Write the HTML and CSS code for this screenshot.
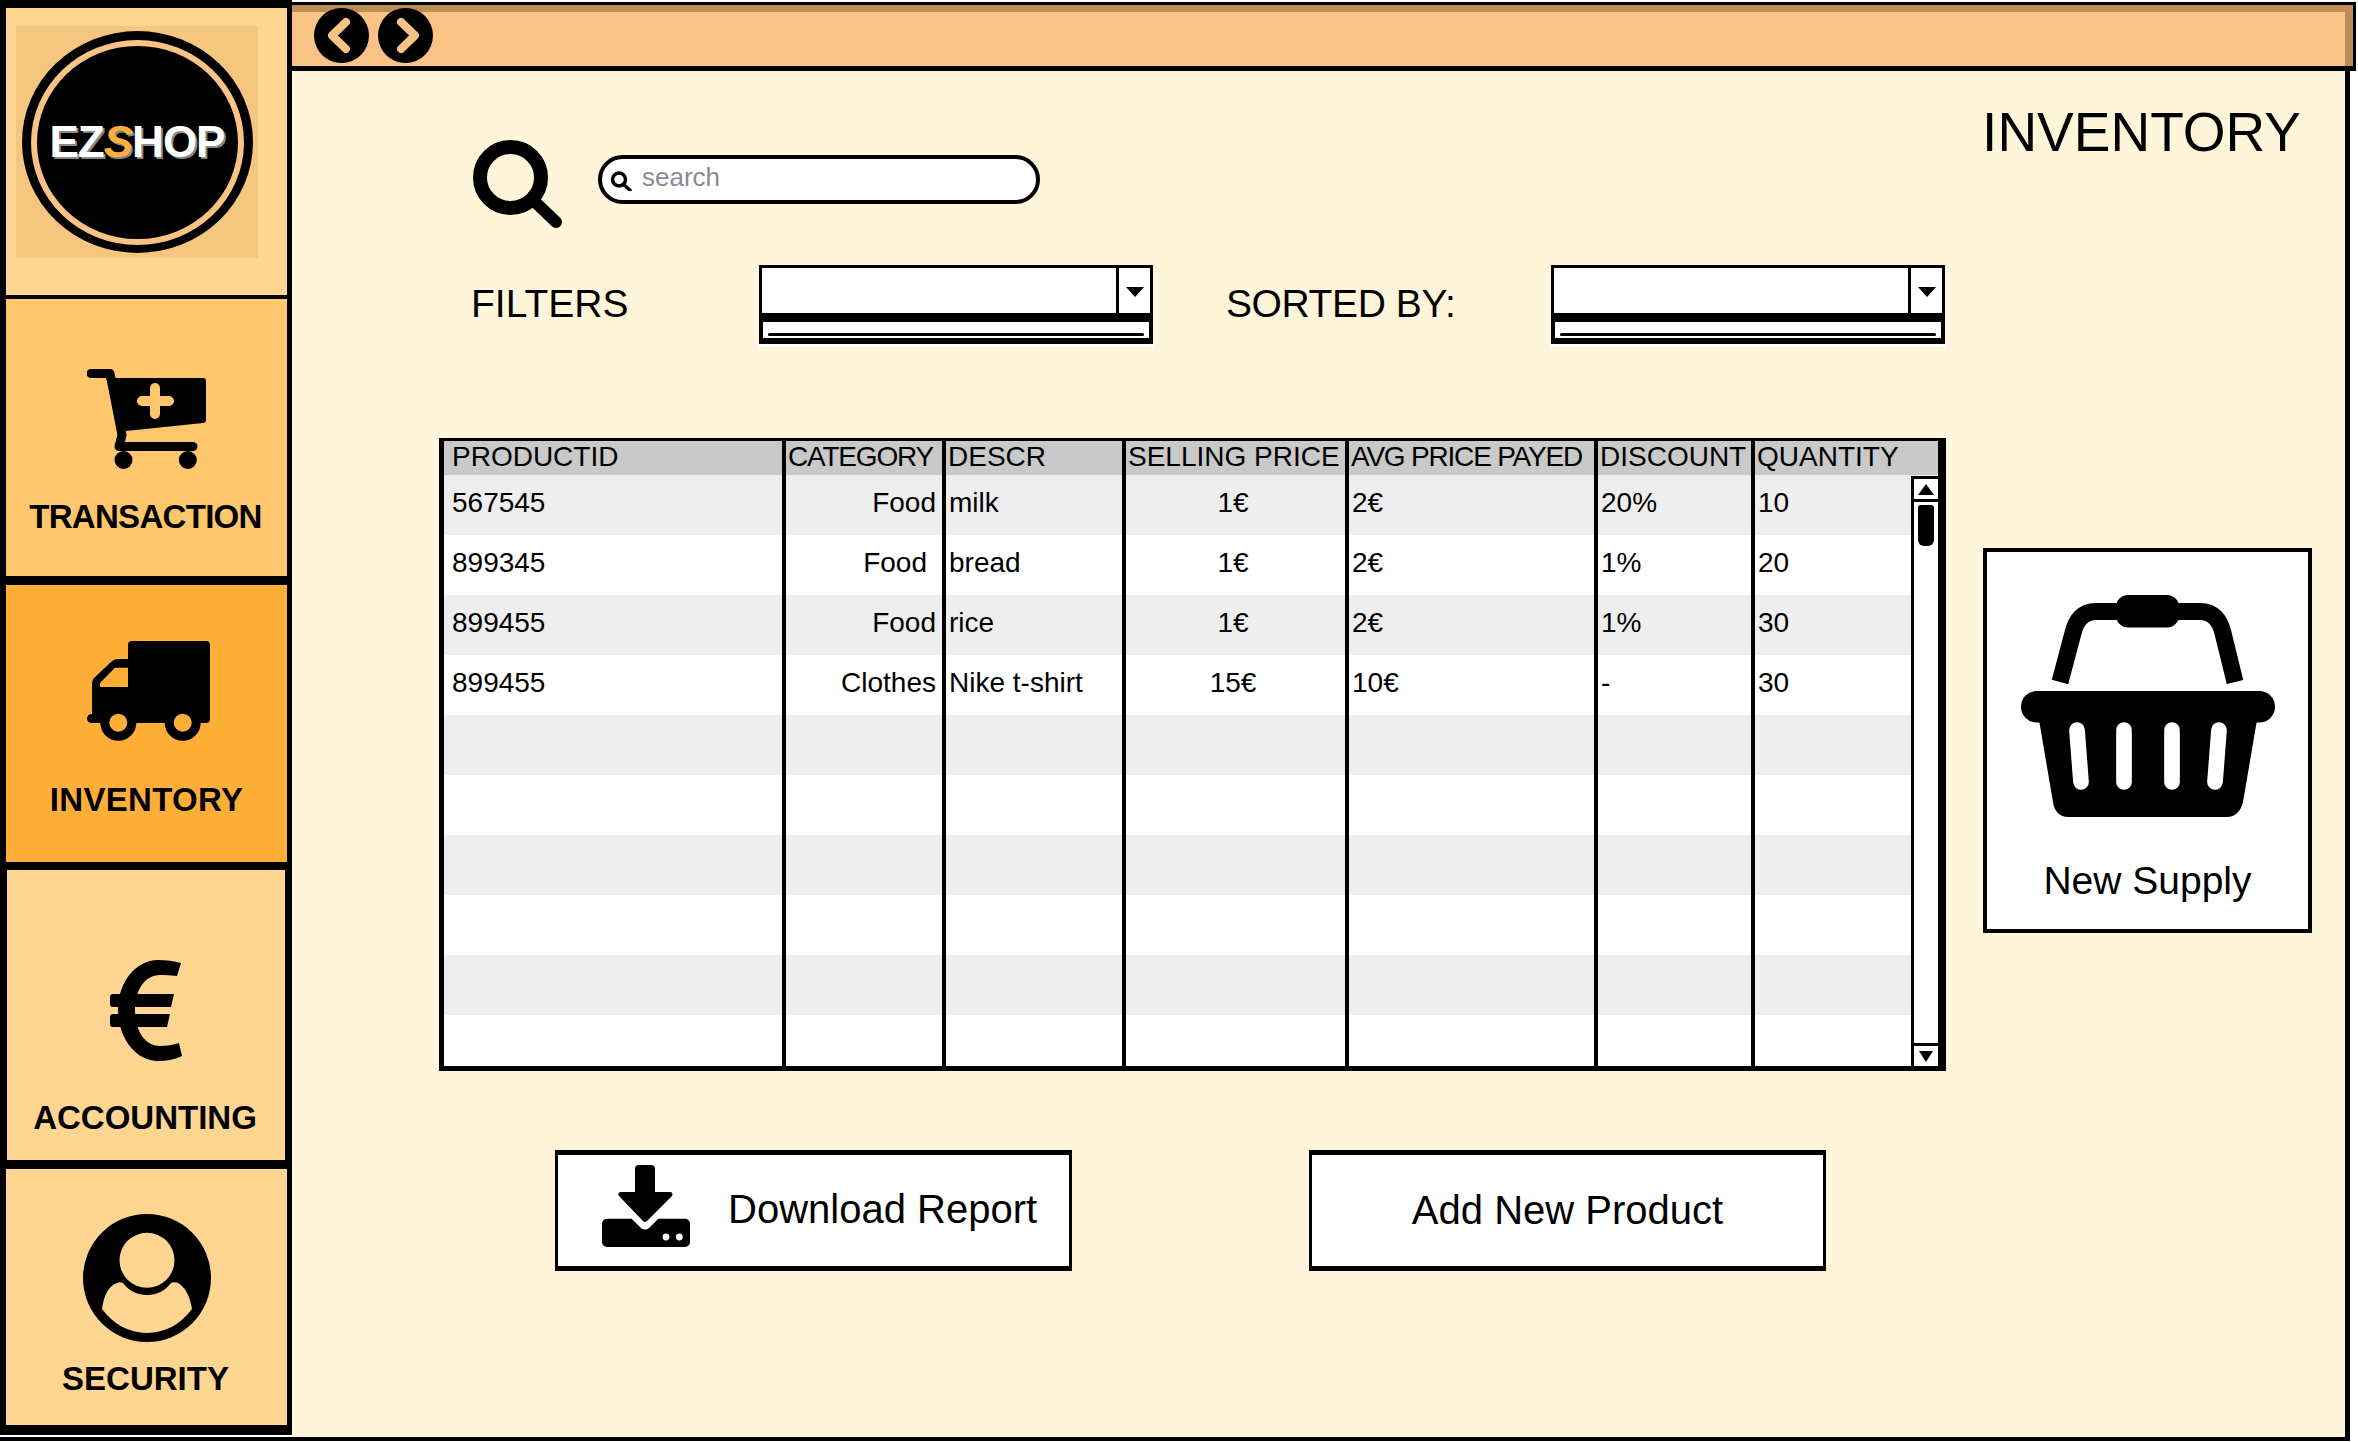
FILE: index.html
```html
<!DOCTYPE html>
<html lang="en">
<head>
    <meta charset="UTF-8">
    <title>EZShop Inventory</title>
    <link rel="stylesheet" href="styles.css">
</head>
<body>

<div class="app">
    <div class="sidebar">
        <div class="nav-logo">
            <div class="logo-bg">
                <div class="logo-circle">
                    <div class="logo-ring">
                        <span class="logo-text">EZ<span class="logo-s">S</span>HOP</span>
                    </div>
                </div>
            </div>
        </div>

        <div class="nav-item nav-transaction">
            <svg class="icon-cart" viewBox="0 0 119 100">
                <path d="M4 4.5H23L35 66L32 77.5H106" fill="none" stroke="#000" stroke-width="9" stroke-linecap="round" stroke-linejoin="round"/>
                <path d="M19 9H116a3 3 0 0 1 3 3V51a3 3 0 0 1-3 3L39 62Z"/>
                <circle cx="36.5" cy="91" r="9"/>
                <circle cx="100.8" cy="91" r="9"/>
                <path d="M68 19V45M55 32H82" fill="none" stroke="#FFC76D" stroke-width="10" stroke-linecap="round"/>
            </svg>
            <span class="nav-label">TRANSACTION</span>
        </div>

        <div class="nav-item nav-inventory">
            <svg class="icon-truck" viewBox="0 0 123 100">
                <path d="M41 4a4 4 0 0 1 4-4H119a4 4 0 0 1 4 4V78a4 4 0 0 1-4 4H41Z"/>
                <path fill-rule="evenodd" d="M42 18H30a9 9 0 0 0-6 3L7 37a8 8 0 0 0-2 5V73H4.500a4.500 4.500 0 0 0 0 9H42ZM42 26.700H28L13 42V46H42Z"/>
                <circle cx="31.300" cy="81.700" r="13.500" fill="#FFAF37" stroke="#000" stroke-width="9"/>
                <circle cx="95.700" cy="81.700" r="13.500" fill="#FFAF37" stroke="#000" stroke-width="9"/>
            </svg>
            <span class="nav-label">INVENTORY</span>
        </div>

        <div class="nav-item nav-accounting">
            <svg class="icon-euro" viewBox="0 0 72 101">
                <path d="M71 3L67 16C60 15 55 15 50 15C35 15 25 30 25 50C25 72 36 86 50 86C57 86 63 85 69 83L72 96C64 100 56 101 48 101C26 101 8 78 8 50C8 22 26 0 48 0C56 0 64 1 71 3Z"/>
                <path d="M3 34H64L61 47H3a3 3 0 0 1-3-3V37a3 3 0 0 1 3-3Z"/>
                <path d="M3 54H60L57 67H3a3 3 0 0 1-3-3V57a3 3 0 0 1 3-3Z"/>
            </svg>
            <span class="nav-label">ACCOUNTING</span>
        </div>

        <div class="nav-item nav-security">
            <svg class="icon-user" viewBox="0 0 128 128">
                <circle cx="64" cy="64" r="64"/>
                <circle cx="64" cy="46.300" r="27.500" fill="#FFD592"/>
                <path fill="#FFD592" d="M19 95C21 80 26 72 34 69C36 68 38 68 40 69C46 77 54 81 64 81C74 81 82 77 88 69C90 68 93 68 95 69C102 73 107 82 109 95C98 110 82 119 64 119C46 119 30 110 19 95Z"/>
            </svg>
            <span class="nav-label">SECURITY</span>
        </div>
    </div>

    <div class="content">
        <div class="topbar">
            <svg class="round-btn" viewBox="0 0 55 55">
                <circle cx="27.500" cy="27.500" r="27.500"/>
                <path d="M32 14L18 27.500L32 41" fill="none" stroke="#F8C384" stroke-width="8" stroke-linecap="round" stroke-linejoin="round"/>
            </svg>
            <svg class="round-btn" viewBox="0 0 55 55">
                <circle cx="27.500" cy="27.500" r="27.500"/>
                <path d="M23 14L37 27.500L23 41" fill="none" stroke="#F8C384" stroke-width="8" stroke-linecap="round" stroke-linejoin="round"/>
            </svg>
        </div>

        <div class="main">
            <div class="top-row">
                <div class="search-row">
                    <svg class="icon-search" viewBox="0 0 90 88">
                        <circle cx="37.500" cy="37.500" r="30.500" fill="none" stroke="#000" stroke-width="14"/>
                        <path d="M60 60L83 82" fill="none" stroke="#000" stroke-width="12" stroke-linecap="round"/>
                    </svg>
                    <div class="search-bar">
                        <svg class="icon-search-small" viewBox="0 0 22 20">
                            <circle cx="9" cy="8.500" r="6.500" fill="none" stroke="#000" stroke-width="3.500"/>
                            <path d="M14 14L20 19" fill="none" stroke="#000" stroke-width="3.500" stroke-linecap="round"/>
                        </svg>
                        <span class="search-text">search</span>
                    </div>
                </div>
                <h1 class="page-title">INVENTORY</h1>
            </div>

            <div class="filter-row">
                <span class="filter-label label-filters">FILTERS</span>
                <div class="select">
                    <div class="select-main">
                        <div class="select-arrow"><div class="tri-down"></div></div>
                    </div>
                    <div class="select-list"><div class="select-line"></div></div>
                </div>
                <span class="filter-label label-sorted">SORTED BY:</span>
                <div class="select">
                    <div class="select-main">
                        <div class="select-arrow"><div class="tri-down"></div></div>
                    </div>
                    <div class="select-list"><div class="select-line"></div></div>
                </div>
            </div>

            <div class="table-row">
                <div class="table-wrap">
                    <table class="grid">
                        <colgroup>
                            <col class="col-id">
                            <col class="col-cat">
                            <col class="col-descr">
                            <col class="col-sell">
                            <col class="col-avg">
                            <col class="col-disc">
                            <col class="col-qty">
                        </colgroup>
                        <thead>
                            <tr>
                                <th class="first">PRODUCTID</th>
                                <th class="tight">CATEGORY</th>
                                <th>DESCR</th>
                                <th>SELLING PRICE</th>
                                <th class="tight">AVG PRICE PAYED</th>
                                <th>DISCOUNT</th>
                                <th>QUANTITY</th>
                            </tr>
                        </thead>
                        <tbody>
                            <tr><td class="first">567545</td><td class="cat">Food</td><td>milk</td><td class="price">1€</td><td>2€</td><td>20%</td><td>10</td></tr>
                            <tr><td class="first">899345</td><td class="cat cat-off">Food</td><td>bread</td><td class="price">1€</td><td>2€</td><td>1%</td><td>20</td></tr>
                            <tr><td class="first">899455</td><td class="cat">Food</td><td>rice</td><td class="price">1€</td><td>2€</td><td>1%</td><td>30</td></tr>
                            <tr><td class="first">899455</td><td class="cat">Clothes</td><td>Nike t-shirt</td><td class="price">15€</td><td>10€</td><td>-</td><td>30</td></tr>
                            <tr><td></td><td></td><td></td><td></td><td></td><td></td><td></td></tr>
                            <tr><td></td><td></td><td></td><td></td><td></td><td></td><td></td></tr>
                            <tr><td></td><td></td><td></td><td></td><td></td><td></td><td></td></tr>
                            <tr><td></td><td></td><td></td><td></td><td></td><td></td><td></td></tr>
                            <tr><td></td><td></td><td></td><td></td><td></td><td></td><td></td></tr>
                            <tr class="last-row"><td></td><td></td><td></td><td></td><td></td><td></td><td></td></tr>
                        </tbody>
                    </table>
                    <div class="scrollbar">
                        <div class="scroll-btn scroll-up"><div class="tri-up"></div></div>
                        <div class="scroll-track"><div class="scroll-thumb"></div></div>
                        <div class="scroll-btn scroll-down"><div class="tri-down-small"></div></div>
                    </div>
                </div>

                <div class="supply-card">
                    <svg class="icon-basket" viewBox="0 0 254 222">
                        <path d="M39 87L52 38C55 25 62 16.500 75 16.500H179C192 16.500 199 25 202 38L214 87" fill="none" stroke="#000" stroke-width="17"/>
                        <rect x="95" y="0" width="63" height="32.500" rx="12"/>
                        <rect x="0" y="96" width="254" height="31.500" rx="15.700"/>
                        <path d="M18 125H236L222 207C220 216 214 222 206 222H47C39 222 33 216 32 207Z"/>
                        <g fill="none" stroke="#fff" stroke-width="15.700" stroke-linecap="round">
                            <path d="M56 135L60 187"/>
                            <path d="M103 135V187"/>
                            <path d="M151 135V187"/>
                            <path d="M198 135L194 187"/>
                        </g>
                    </svg>
                    <span class="supply-label">New Supply</span>
                </div>
            </div>

            <div class="button-row">
                <button class="action-btn btn-download">
                    <svg class="icon-download" viewBox="0 0 90 82">
                        <path d="M38 0H50a4 4 0 0 1 4 4V27H69a2.500 2.500 0 0 1 2 4L46 56a3 3 0 0 1-4 0L18 31a2.500 2.500 0 0 1 1-4H34V4a4 4 0 0 1 4-4Z"/>
                        <path fill-rule="evenodd" d="M6 53.700H30.700L40 63a6 6 0 0 0 8 0L57.300 53.700H84a5 5 0 0 1 5 5V77a5 5 0 0 1-5 5H6a5 5 0 0 1-5-5V58.700a5 5 0 0 1 5-5Z"/>
                        <circle cx="65" cy="72" r="3.400" fill="#fff"/>
                        <circle cx="78.300" cy="72" r="3.400" fill="#fff"/>
                    </svg>
                    <span>Download Report</span>
                </button>
                <button class="action-btn btn-add">Add New Product</button>
            </div>
        </div>
    </div>
</div>

</body>
</html>
```

FILE: styles.css
```css
body {
    margin: 0;
    background-color: #fff;
    font-family: "Liberation Sans", Arial, sans-serif;
    color: #000;
}
.app {
    display: flex;
    width: 2350px;
    height: 1441px;
    box-sizing: border-box;
    border-bottom: 4px solid #000;
}

/* sidebar */
.sidebar {
    width: 292px;
    flex: none;
}
.nav-logo, .nav-item {
    box-sizing: border-box;
    border-style: solid;
    border-color: #000;
    border-width: 0 5px 0 6px;
}
.nav-logo {
    height: 299px;
    border-top-width: 8px;
    border-bottom-width: 4px;
    background-color: #FFD592;
    padding: 18px 29px 0 10px;
}
.logo-bg {
    display: flex;
    justify-content: center;
    align-items: center;
    height: 232px;
    background-color: #F5C67D;
}
.logo-circle {
    display: flex;
    justify-content: center;
    align-items: center;
    width: 231px;
    height: 222px;
    border-radius: 50%;
    background-color: #000;
}
.logo-ring {
    display: flex;
    justify-content: center;
    align-items: center;
    width: 213px;
    height: 205px;
    box-sizing: border-box;
    border: 6px solid #F8C384;
    border-radius: 50%;
}
.logo-text {
    font-size: 44px;
    font-weight: bold;
    letter-spacing: -1px;
    color: #fff;
    text-shadow: 2px 2px 0 #888;
}
.logo-s {
    color: #FFAF37;
    font-style: italic;
}
.nav-item {
    display: flex;
    flex-direction: column;
    align-items: center;
}
.nav-label {
    font-size: 33px;
    font-weight: bold;
    line-height: 38px;
}
.nav-transaction {
    height: 286px;
    border-bottom-width: 9px;
    background-color: #FFC76D;
    padding-top: 70px;
}
.nav-transaction .nav-label {
    letter-spacing: -0.7px;
    margin-right: 2px;
}
.nav-inventory {
    height: 285px;
    border-bottom-width: 8px;
    background-color: #FFAF37;
    padding-top: 56px;
}
.nav-inventory .nav-label {
    letter-spacing: 0.3px;
}
.nav-accounting {
    height: 299px;
    border-width: 0 7px 9px 7px;
    background-color: #FFD592;
    padding-top: 90px;
}
.nav-accounting .nav-label {
    margin-right: 2px;
}
.nav-security {
    height: 266px;
    border-bottom-width: 10px;
    background-color: #FFD592;
    padding-top: 45px;
}
.nav-security .nav-label {
    margin-right: 2px;
}
.icon-cart {
    width: 119px;
    height: 100px;
    margin-bottom: 29px;
}
.icon-truck {
    width: 123px;
    height: 100px;
    margin: 0 0 40px 3px;
}
.icon-euro {
    width: 72px;
    height: 101px;
    margin-bottom: 38px;
}
.icon-user {
    width: 128px;
    height: 128px;
    margin-bottom: 18px;
}

/* right side */
.content {
    flex: 1;
    display: flex;
    flex-direction: column;
    min-width: 0;
}
.topbar {
    display: flex;
    gap: 9px;
    align-items: center;
    height: 69px;
    flex: none;
    box-sizing: border-box;
    margin: 2px -6px 0 0;
    padding-left: 22px;
    border-top: 3px solid #000;
    border-bottom: 5px solid #000;
    border-right: 3px solid #000;
    background-color: #F8C384;
    box-shadow: inset -8px 7px 0 #BC8C56;
}
.round-btn {
    width: 55px;
    height: 55px;
}
.main {
    flex: 1;
    box-sizing: border-box;
    background-color: #FFF5DA;
    border-right: 5px solid #000;
}
.top-row {
    display: flex;
    justify-content: space-between;
    height: 194px;
}
.search-row {
    display: flex;
    align-items: flex-start;
    gap: 35px;
    margin: 69px 0 0 181px;
}
.icon-search {
    width: 90px;
    height: 88px;
}
.search-bar {
    display: flex;
    align-items: center;
    gap: 10px;
    width: 442px;
    height: 49px;
    margin-top: 15px;
    box-sizing: border-box;
    padding: 0 0 4px 8px;
    border: 4px solid #000;
    border-radius: 25px;
    background-color: #fff;
}
.icon-search-small {
    width: 22px;
    height: 20px;
    margin-top: 6px;
}
.search-text {
    font-size: 26px;
    color: #8A8A96;
}
.page-title {
    margin: 29px 44px 0 0;
    font-size: 55px;
    font-weight: normal;
    line-height: 64px;
}

/* filters */
.filter-row {
    display: flex;
    height: 79px;
}
.filter-label {
    font-size: 39px;
    line-height: 78px;
}
.label-filters {
    width: 288px;
    margin-left: 179px;
}
.label-sorted {
    width: 325px;
    margin-left: 73px;
    letter-spacing: -0.4px;
}
.select {
    width: 394px;
    height: 82px;
    background-color: #fff;
}
.select-main {
    display: flex;
    justify-content: flex-end;
    height: 48px;
    box-sizing: border-box;
    border: solid #000;
    border-width: 3px 3px 0 3px;
}
.select-arrow {
    display: flex;
    justify-content: center;
    padding-top: 19px;
    width: 31px;
    border-left: 3px solid #000;
}
.tri-down {
    width: 0;
    height: 0;
    border-left: 9px solid transparent;
    border-right: 9px solid transparent;
    border-top: 10px solid #000;
}
.select-list {
    height: 31px;
    box-sizing: border-box;
    padding: 11px 5px 0 5px;
    border: solid #000;
    border-width: 9px 4px 6px 4px;
}
.select-line {
    height: 3px;
    background-color: #000;
    border-radius: 2px;
}

/* table */
.table-row {
    display: flex;
    align-items: flex-start;
    margin: 94px 0 0 147px;
}
.table-wrap {
    position: relative;
    width: 1507px;
    height: 633px;
    flex: none;
    box-sizing: border-box;
    overflow: hidden;
    border: solid #000;
    border-width: 3px 8px 5px 5px;
    background-color: #fff;
}
.grid {
    width: 1494px;
    table-layout: fixed;
    border-collapse: separate;
    border-spacing: 0;
    font-size: 28px;
}
.col-id { width: 342px; }
.col-cat { width: 160px; }
.col-descr { width: 180px; }
.col-sell { width: 223px; }
.col-avg { width: 249px; }
.col-disc { width: 157px; }
.col-qty { width: 183px; }
.grid th, .grid td {
    padding: 0 0 0 3px;
    border-right: 4px solid #000;
    white-space: nowrap;
    text-align: left;
    font-weight: normal;
    overflow: hidden;
}
.grid th:last-child, .grid td:last-child {
    border-right: none;
}
.grid th {
    height: 31px;
    padding: 0 0 3px 2px;
    line-height: 30px;
    background-color: #C9C9C9;
}
.grid td {
    height: 60px;
    padding-bottom: 4px;
    box-sizing: border-box;
}
.grid tbody tr:nth-child(odd) td {
    background-color: #EEEEEE;
}
.grid .last-row td {
    height: 51px;
}
.grid .first {
    padding-left: 8px;
}
.grid .tight {
    letter-spacing: -1.2px;
}
.grid .cat {
    padding-right: 6px;
    text-align: right;
}
.grid .cat-off {
    padding-right: 15px;
}
.grid .price {
    padding-right: 8px;
    text-align: center;
}
.scrollbar {
    position: absolute;
    top: 35px;
    right: 0;
    bottom: 0;
    width: 27px;
    box-sizing: border-box;
    display: flex;
    flex-direction: column;
    border-left: 3px solid #000;
    border-top: 3px solid #000;
    background-color: #fff;
}
.scroll-btn {
    display: flex;
    justify-content: center;
    align-items: center;
    height: 20px;
    flex: none;
}
.scroll-up {
    border-bottom: 3px solid #000;
}
.scroll-down {
    border-top: 3px solid #000;
}
.tri-up {
    width: 0;
    height: 0;
    border-left: 8px solid transparent;
    border-right: 8px solid transparent;
    border-bottom: 11px solid #000;
}
.tri-down-small {
    width: 0;
    height: 0;
    border-left: 7px solid transparent;
    border-right: 7px solid transparent;
    border-top: 11px solid #000;
}
.scroll-track {
    flex: 1;
    padding: 3px 0 0 4px;
}
.scroll-thumb {
    width: 16px;
    height: 41px;
    background-color: #000;
    border-radius: 3px 3px 6px 6px;
}

/* new supply */
.supply-card {
    display: flex;
    flex-direction: column;
    align-items: center;
    width: 329px;
    height: 385px;
    box-sizing: border-box;
    margin: 110px 0 0 37px;
    padding-top: 43px;
    border: 4px solid #000;
    background-color: #fff;
}
.icon-basket {
    width: 254px;
    height: 222px;
    margin-bottom: 43px;
}
.supply-label {
    font-size: 39px;
    line-height: 42px;
}

/* buttons */
.button-row {
    display: flex;
    gap: 237px;
    margin: 79px 0 0 263px;
}
.action-btn {
    display: flex;
    justify-content: center;
    align-items: center;
    width: 517px;
    height: 121px;
    box-sizing: border-box;
    padding-bottom: 2px;
    border: solid #000;
    border-width: 5px 3px;
    background-color: #fff;
    font-family: "Liberation Sans", Arial, sans-serif;
    font-size: 40px;
    color: #000;
    cursor: pointer;
}
.btn-download {
    justify-content: flex-start;
    gap: 37px;
    padding: 0 0 2px 43px;
}
.icon-download {
    width: 90px;
    height: 82px;
    margin-top: -7px;
}
```
